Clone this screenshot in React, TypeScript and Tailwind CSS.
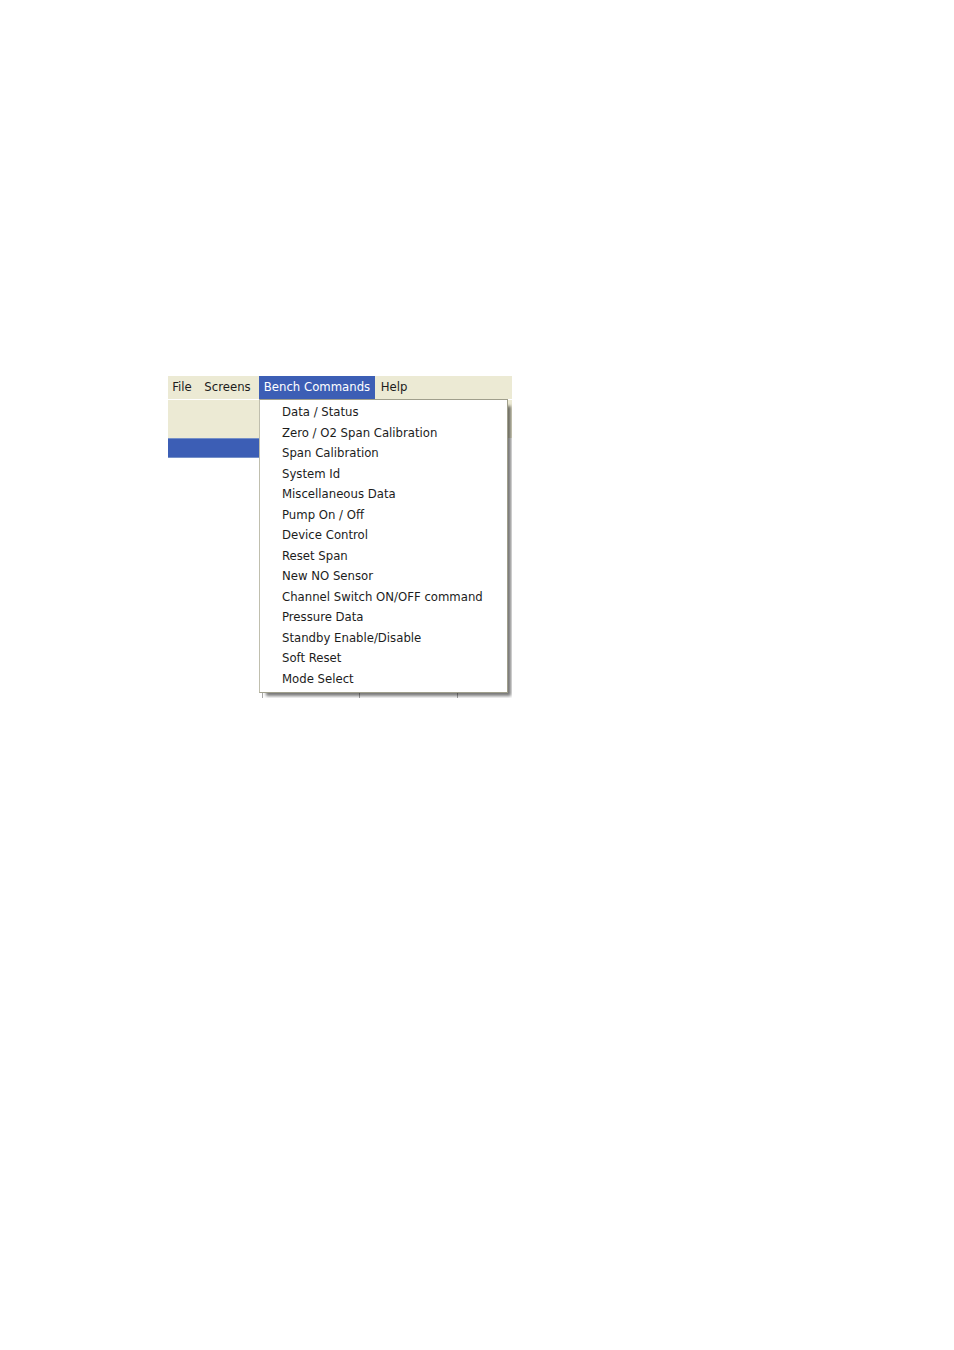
import clsx from 'clsx'

const benchCommands = [
  'Data / Status',
  'Zero / O2 Span Calibration',
  'Span Calibration',
  'System Id',
  'Miscellaneous Data',
  'Pump On / Off',
  'Device Control',
  'Reset Span',
  'New NO Sensor',
  'Channel Switch ON/OFF command',
  'Pressure Data',
  'Standby Enable/Disable',
  'Soft Reset',
  'Mode Select',
]

const menus = [
  { label: 'File', width: 'w-7' },
  { label: 'Screens', width: 'w-[63px]' },
  { label: 'Bench Commands', width: 'w-[116px]', items: benchCommands },
  { label: 'Help', width: 'w-[38px]' },
]

const DropDown = ({ items }: { items: string[] }) => (
  <ul
    role="menu"
    className="absolute top-full left-0 z-10 grid h-[294px] w-[249px] auto-rows-fr border border-[#a09f8c] border-l-[#c0bfae] bg-white pt-0.5 pb-[3px] text-[#1c1c1c] shadow-[5px_5px_3px_-2px_#00000088]"
  >
    {items.map((item) => (
      <li key={item} role="none" className="flex">
        <button
          role="menuitem"
          className="flex w-full items-center pl-[22px] whitespace-nowrap"
        >
          {item}
        </button>
      </li>
    ))}
  </ul>
)

const MenuBar = () => (
  <nav className="flex h-[23px] bg-[#ecead4] text-[#1c1c1c]">
    {menus.map(({ label, width, items }) => (
      <div key={label} className={clsx('relative h-full', width)}>
        <button
          aria-haspopup="menu"
          aria-expanded={!!items}
          className={clsx(
            'flex h-full w-full items-center justify-center pb-px whitespace-nowrap',
            items && 'bg-[#3c5eb5] text-white',
          )}
        >
          {label}
        </button>
        {items && <DropDown items={items} />}
      </div>
    ))}
  </nav>
)

export default function App() {
  return (
    <main className="min-h-screen bg-white px-[168px] pt-[376px] font-['DejaVu_Sans_Condensed','DejaVu_Sans',sans-serif] text-[13px] leading-4">
      <section className="w-full max-w-[344px] overflow-hidden">
        <MenuBar />
        <div className="mt-px h-[38px] bg-[#ecead4]" />
        <div className="h-5 w-[92px] border-y border-[#7590c8] bg-[#3c5eb5]" />
        {/* table columns that run on below the open menu */}
        <div className="flex h-60 pl-[94px]">
          <div className="w-[97px] border-l border-[#a8a8a8]" />
          <div className="w-[98px] border-l border-[#a8a8a8]" />
          <div className="flex-1 border-l border-[#a8a8a8]" />
        </div>
      </section>
    </main>
  )
}
